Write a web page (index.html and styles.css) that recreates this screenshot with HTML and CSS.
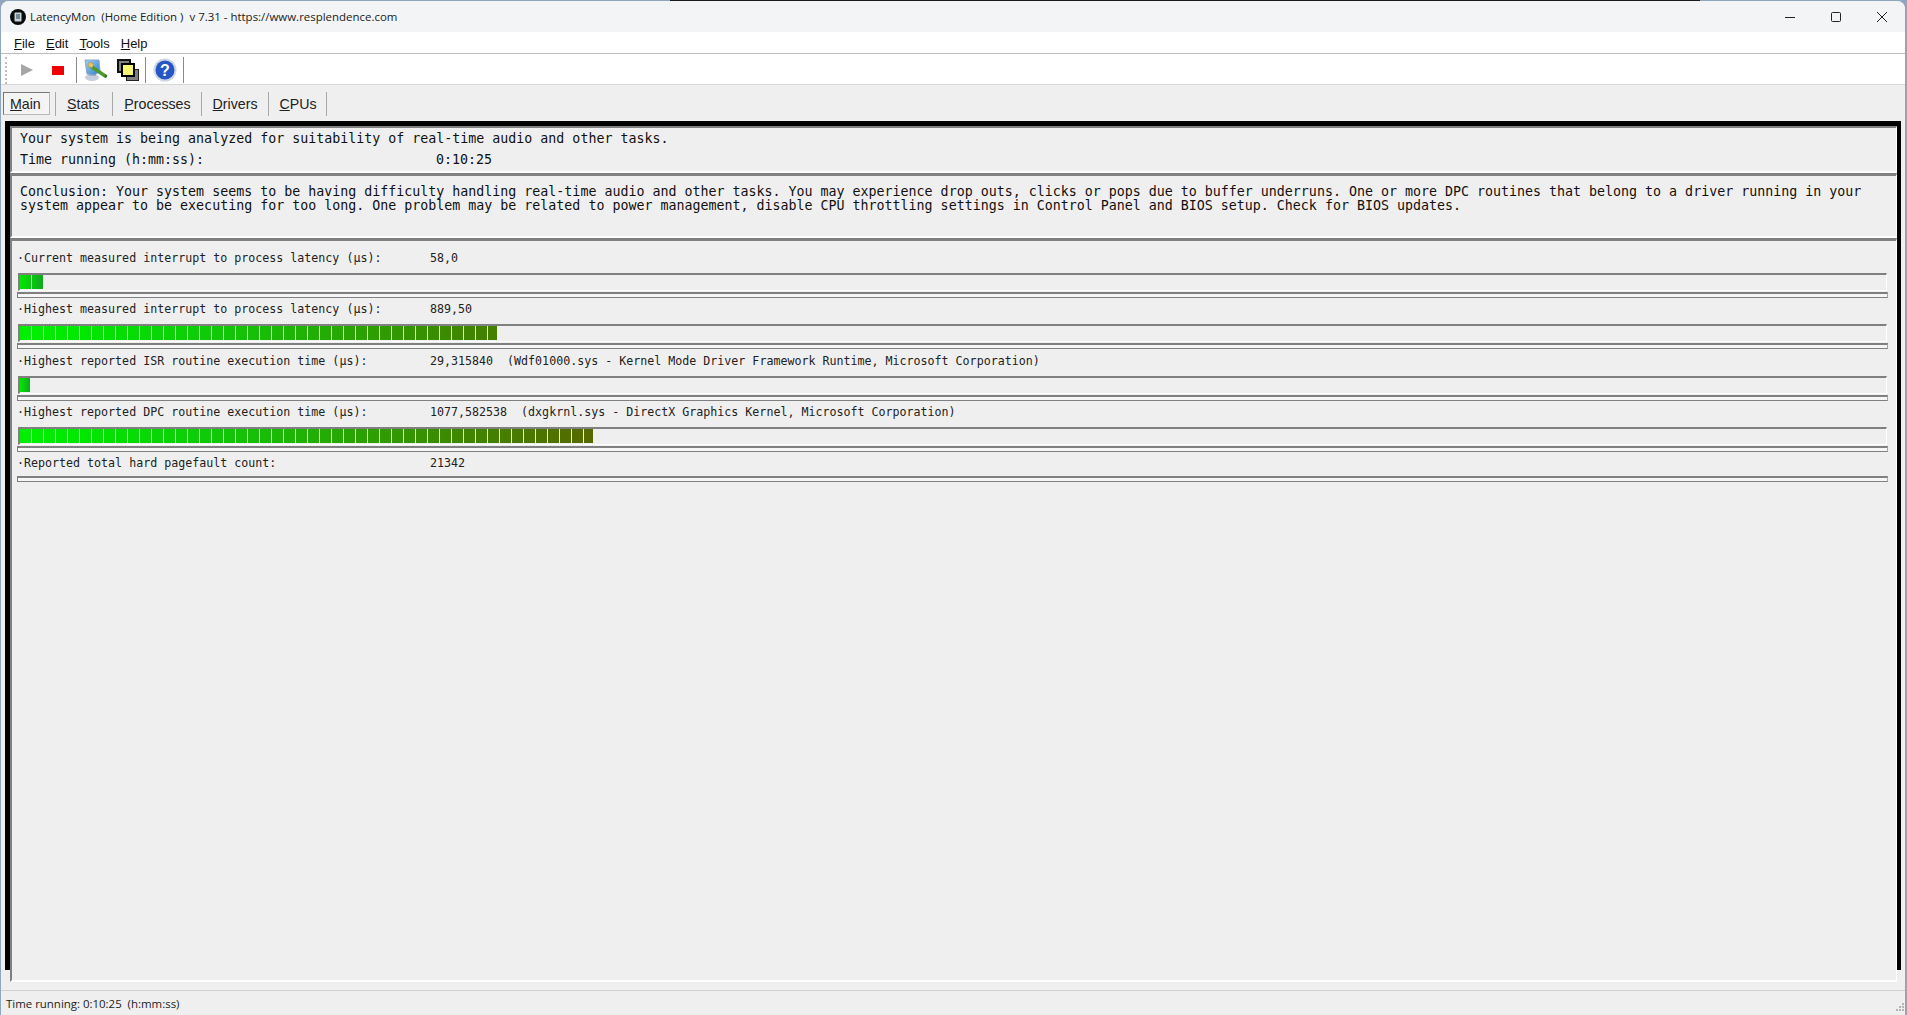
FILE: index.html
```html
<!DOCTYPE html>
<html lang="en">
<head>
<meta charset="utf-8">
<title>LatencyMon</title>
<link rel="stylesheet" href="styles.css">
</head>
<body>
<div class="window">
  <header class="titlebar">
    <svg class="app-icon" viewBox="0 0 16 16" width="16" height="16"><circle cx="8" cy="8" r="8" fill="#0b0b0b"/><rect x="4.500" y="3.500" width="7" height="9" rx="1" fill="#c8d4dc"/><rect x="6" y="5" width="4" height="5" fill="#6f8796"/></svg>
    <span class="title-text">LatencyMon&nbsp; (Home Edition )&nbsp; v 7.31 - https://www.resplendence.com</span>
    <div class="caption">
      <svg viewBox="0 0 46 32" width="46" height="32"><path d="M18 16.500h10" stroke="#222" stroke-width="1" fill="none"/></svg>
      <svg viewBox="0 0 46 32" width="46" height="32"><rect x="18.500" y="11.500" width="9" height="9" rx="1" stroke="#222" stroke-width="1" fill="none"/></svg>
      <svg viewBox="0 0 46 32" width="46" height="32"><path d="M18 11l10 10M28 11l-10 10" stroke="#222" stroke-width="1" fill="none"/></svg>
    </div>
  </header>
  <nav class="menubar">
    <span><u>F</u>ile</span><span><u>E</u>dit</span><span><u>T</u>ools</span><span><u>H</u>elp</span>
  </nav>
  <div class="toolbar">
    <div class="tool-group first">
      <svg viewBox="0 0 14 14" width="14" height="14"><path d="M1 1l12 6-12 6z" fill="#a6a6a6"/></svg>
      <span class="stop"></span>
    </div>
    <div class="tool-group second">
      <svg viewBox="0 0 24 22" width="24" height="22">
        <defs>
          <linearGradient id="scr" x1="0" y1="0" x2="1" y2="1"><stop offset="0" stop-color="#9ed0f5"/><stop offset="1" stop-color="#2f7fd0"/></linearGradient>
        </defs>
        <ellipse cx="8" cy="18.500" rx="7" ry="3.500" fill="#c4cede"/>
        <path d="M5 13h7v4H5z" fill="#9fb0c8"/>
        <path d="M1 1l14 0 1 11-5 4-8-1z" fill="url(#scr)" stroke="#8ea4c4"/>
        <path d="M8 6l15 10-2 3L6 9z" fill="#4c9a2e"/>
        <path d="M21.500 15.500l2 1-1.500 2.500-1.500-1z" fill="#2d6a18"/>
        <path d="M5 3l5 2-2 4-4-2z" fill="#e8c860" stroke="#a88a30" stroke-width=".5"/>
      </svg>
      <svg viewBox="0 0 22 22" width="22" height="22">
        <rect x="9.500" y="10.500" width="12" height="11" fill="#808080" stroke="#222"/>
        <rect x="1" y="1" width="12" height="12" fill="#808080" stroke="#111" stroke-width="2"/>
        <rect x="5" y="5" width="12" height="12" fill="#f8f870" stroke="#000" stroke-width="2"/>
      </svg>
    </div>
    <div class="tool-group third">
      <svg viewBox="0 0 24 24" width="24" height="24">
        <circle cx="12" cy="12" r="11.500" fill="#cfd7e3"/>
        <circle cx="12" cy="12" r="9.500" fill="#2456c4"/>
        <text x="12" y="17.500" class="help-mark">?</text>
      </svg>
    </div>
  </div>
  <div class="tabs">
    <span class="tab active"><u>M</u>ain</span>
    <span class="tab stats"><u>S</u>tats</span>
    <span class="tab"><u>P</u>rocesses</span>
    <span class="tab"><u>D</u>rivers</span>
    <span class="tab"><u>C</u>PUs</span>
  </div>
  <main class="frame">
    <section class="panel status">
      <p>Your system is being analyzed for suitability of real-time audio and other tasks.</p>
      <p class="time-row"><span class="time-label">Time running (h:mm:ss):</span><span>0:10:25</span></p>
    </section>
    <section class="panel conclusion">
      <p>Conclusion: Your system seems to be having difficulty handling real-time audio and other tasks. You may experience drop outs, clicks or pops due to buffer underruns. One or more DPC routines that belong to a driver running in your system appear to be executing for too long. One problem may be related to power management, disable CPU throttling settings in Control Panel and BIOS setup. Check for BIOS updates.</p>
    </section>
    <section class="panel metrics">
      <div class="metric">
        <div class="metric-row"><span class="metric-label">·Current measured interrupt to process latency (µs):</span><span>58,0</span></div>
        <div class="track"><div class="fill short" style="width:23px"></div></div>
        <div class="rule"></div>
      </div>
      <div class="metric">
        <div class="metric-row"><span class="metric-label">·Highest measured interrupt to process latency (µs):</span><span>889,50</span></div>
        <div class="track"><div class="fill" style="width:477px"></div></div>
        <div class="rule"></div>
      </div>
      <div class="metric">
        <div class="metric-row"><span class="metric-label">·Highest reported ISR routine execution time (µs):</span><span class="metric-value">29,315840</span><span>(Wdf01000.sys - Kernel Mode Driver Framework Runtime, Microsoft Corporation)</span></div>
        <div class="track"><div class="fill short" style="width:10px"></div></div>
        <div class="rule"></div>
      </div>
      <div class="metric">
        <div class="metric-row"><span class="metric-label">·Highest reported DPC routine execution time (µs):</span><span class="metric-value">1077,582538</span><span>(dxgkrnl.sys - DirectX Graphics Kernel, Microsoft Corporation)</span></div>
        <div class="track"><div class="fill" style="width:573px"></div></div>
        <div class="rule"></div>
      </div>
      <div class="metric">
        <div class="metric-row"><span class="metric-label">·Reported total hard pagefault count:</span><span>21342</span></div>
        <div class="rule last"></div>
      </div>
    </section>
  </main>
  <footer class="statusbar">
    Time running: 0:10:25&nbsp; (h:mm:ss)
    <svg class="grip" viewBox="0 0 10 10" width="10" height="10"><path d="M7 0h2v2H7zM4 3h2v2H4zM7 3h2v2H7zM1 6h2v2H1zM4 6h2v2H4zM7 6h2v2H7z" fill="#b4b4b4"/></svg>
  </footer>
</div>
</body>
</html>
```

FILE: styles.css
```css
* { box-sizing: border-box; }
html, body { margin: 0; height: 100%; overflow: hidden; }
body {
  padding: 1px 2px 0 1px;
  background: linear-gradient(90deg, #8fa6bc 670px, #1a1a1a 670px 1700px, #8fa6bc 1700px) top / 100% 1px no-repeat, #8fa6bc;
}
p { margin: 0; }
u { text-decoration-thickness: 1px; text-underline-offset: 1px; }

.window {
  height: 1014px;
  background: #efefef;
  border-radius: 8px 8px 0 0;
  display: flex;
  flex-direction: column;
  font-family: "Liberation Sans", Arial, sans-serif;
  color: #111;
  overflow: hidden;
}

.titlebar {
  height: 31px;
  flex: none;
  background: #f2f4f6;
  display: flex;
  align-items: center;
  padding-left: 9px;
  font-family: "Open Sans", "Noto Sans", sans-serif;
  font-size: 11.460px;
}
.app-icon { flex: none; margin-right: 4px; }
.title-text { color: #222; }
.caption { margin-left: auto; display: flex; }
.caption svg { display: block; }

.menubar {
  height: 22px;
  flex: none;
  background: #fff;
  border-bottom: 1px solid #bdbdbd;
  display: flex;
  align-items: center;
  gap: 11px;
  padding: 1px 0 0 13px;
  font-size: 13px;
}

.toolbar {
  height: 31px;
  flex: none;
  background: #fff;
  border-bottom: 1px solid #d8d8d8;
  display: flex;
  align-items: center;
  padding: 2px 0 0 4px;
}
.toolbar::before {
  content: "";
  flex: none;
  height: 27px;
  width: 2px;
  border-left: 2px dotted #bdbdbd;
}
.tool-group {
  height: 26px;
  flex: none;
  display: flex;
  align-items: center;
  border-right: 1px solid #8a8a8a;
}
.tool-group.first { width: 68px; padding-left: 11px; gap: 18px; }
.tool-group.second { width: 69px; padding-left: 7px; gap: 9px; }
.tool-group.third { width: 38px; padding-left: 7px; }
.stop { width: 12px; height: 9px; background: #f00000; display: block; }
.help-mark { font: bold 16px "Liberation Sans", sans-serif; fill: #fff; text-anchor: middle; }

.tabs {
  height: 36px;
  flex: none;
  display: flex;
  align-items: center;
  padding: 1px 0 0 2px;
  font-size: 14.200px;
  color: #222;
}
.tab {
  height: 24px;
  display: flex;
  align-items: center;
  padding: 0 10px 0 11px;
  border-right: 1px solid #a8a8a8;
}
.tab.stats { border-left: 1px solid #a8a8a8; padding-right: 13px; }
.tab:last-child { padding-right: 9px; }
.tab.active {
  width: 47px;
  height: 23px;
  padding: 0 0 0 6px;
  margin-right: 5px;
  border: 1px solid #b8b8b8;
  border-top-color: #777;
  border-left-color: #777;
  background: #f4f4f4;
}

.frame {
  flex: none;
  height: 861px;
  margin: 0 4px 8px 4px;
  padding: 0 4px 0 5px;
  border-top: 5px solid #000;
  background:
    linear-gradient(#000, #000) left top / 5px 844px no-repeat,
    linear-gradient(#000, #000) right top / 4px 844px no-repeat,
    #efefef;
  display: flex;
  flex-direction: column;
  font-family: "DejaVu Sans Mono", monospace;
  min-height: 0;
}

.panel {
  border-top: 3px solid #808080;
  border-left: 2px solid #808080;
  border-right: 1px solid #fff;
  font-size: 13.300px;
}
.status {
  height: 47px;
  flex: none;
  display: flex;
  flex-direction: column;
  gap: 3px;
  padding: 2px 0 0 8px;
  line-height: 18px;
  border-top-width: 2px;
  border-bottom: 2px solid #fff;
}
.time-row { display: flex; }
.time-label { width: 416px; }
.conclusion {
  height: 65px;
  flex: none;
  padding: 9px 30px 0 8px;
  line-height: 14px;
  border-bottom: 2px solid #fff;
}
.metrics {
  flex: 1;
  padding: 9px 8px 0 5px;
  font-size: 11.650px;
  border-bottom: 2px solid #fff;
}
.metric { height: 51.300px; }
.metric-row { height: 16px; line-height: 16px; display: flex; white-space: pre; color: #222; }
.metric-label { width: 413px; flex: none; }
.metric-value { margin-right: 14px; }
.track {
  height: 18px;
  margin: 7px 1px 0 1px;
  border-top: 2px solid #808080;
  border-left: 2px solid #808080;
  border-bottom: 1px solid #fff;
  border-right: 1px solid #fff;
  overflow: hidden;
}
.fill {
  height: 14px;
  background-image:
    repeating-linear-gradient(90deg, transparent 0 11px, #e8f5e0 11px 12px),
    linear-gradient(90deg, #00f000 0, #00e800 60px, #10c808 200px, #3c8a00 430px, #5a6400 590px);
  background-size: auto, 600px 100%;
  background-repeat: repeat, no-repeat;
}
.fill.short {
  background-image:
    repeating-linear-gradient(90deg, transparent 0 11px, #e8f5e0 11px 12px),
    linear-gradient(90deg, #00e800, #10a820);
  background-size: auto, 100% 100%;
}
.rule {
  height: 6px;
  margin-top: 1px;
  border: 1px solid #808080;
  border-top-width: 2px;
  border-right-color: #a8a8a8;
  background: #f6f6f6;
}
.rule.last { margin-top: 5px; }

.statusbar {
  height: 23px;
  flex: none;
  position: relative;
  border-top: 1px solid #d0d0d0;
  padding: 5px 0 0 5px;
  line-height: 16px;
  font-family: "Open Sans", "Noto Sans", sans-serif;
  font-size: 11.450px;
  color: #222;
}
.grip { position: absolute; right: 0; bottom: 0; }
```
